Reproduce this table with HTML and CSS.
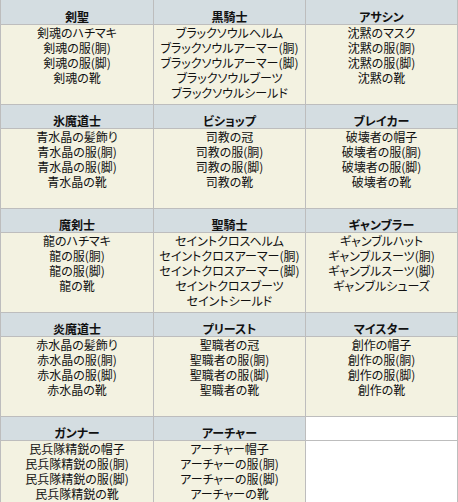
FILE: index.html
```html
<!DOCTYPE html>
<html lang="ja">
<head>
<meta charset="utf-8">
<link rel="stylesheet" href="styles.css">
</head>
<body>
<table class="gear">
  <colgroup><col class="c1"><col class="c2"><col class="c3"></colgroup>
  <tr class="head">
    <td>剣聖</td><td>黒騎士</td><td>アサシン</td>
  </tr>
  <tr class="items">
    <td>剣魂のハチマキ<br>剣魂の服(胴)<br>剣魂の服(脚)<br>剣魂の靴</td>
    <td>ブラックソウルヘルム<br>ブラックソウルアーマー(胴)<br>ブラックソウルアーマー(脚)<br>ブラックソウルブーツ<br>ブラックソウルシールド</td>
    <td>沈黙のマスク<br>沈黙の服(胴)<br>沈黙の服(脚)<br>沈黙の靴</td>
  </tr>
  <tr class="head">
    <td>氷魔道士</td><td>ビショップ</td><td>ブレイカー</td>
  </tr>
  <tr class="items">
    <td>青水晶の髪飾り<br>青水晶の服(胴)<br>青水晶の服(脚)<br>青水晶の靴</td>
    <td>司教の冠<br>司教の服(胴)<br>司教の服(脚)<br>司教の靴</td>
    <td>破壊者の帽子<br>破壊者の服(胴)<br>破壊者の服(脚)<br>破壊者の靴</td>
  </tr>
  <tr class="head">
    <td>魔剣士</td><td>聖騎士</td><td>ギャンブラー</td>
  </tr>
  <tr class="items">
    <td>龍のハチマキ<br>龍の服(胴)<br>龍の服(脚)<br>龍の靴</td>
    <td>セイントクロスヘルム<br>セイントクロスアーマー(胴)<br>セイントクロスアーマー(脚)<br>セイントクロスブーツ<br>セイントシールド</td>
    <td>ギャンブルハット<br>ギャンブルスーツ(胴)<br>ギャンブルスーツ(脚)<br>ギャンブルシューズ</td>
  </tr>
  <tr class="head">
    <td>炎魔道士</td><td>プリースト</td><td>マイスター</td>
  </tr>
  <tr class="items">
    <td>赤水晶の髪飾り<br>赤水晶の服(胴)<br>赤水晶の服(脚)<br>赤水晶の靴</td>
    <td>聖職者の冠<br>聖職者の服(胴)<br>聖職者の服(脚)<br>聖職者の靴</td>
    <td>創作の帽子<br>創作の服(胴)<br>創作の服(脚)<br>創作の靴</td>
  </tr>
  <tr class="head">
    <td>ガンナー</td><td>アーチャー</td><td class="empty"></td>
  </tr>
  <tr class="items last">
    <td>民兵隊精鋭の帽子<br>民兵隊精鋭の服(胴)<br>民兵隊精鋭の服(脚)<br>民兵隊精鋭の靴</td>
    <td>アーチャー帽子<br>アーチャーの服(胴)<br>アーチャーの服(脚)<br>アーチャーの靴</td>
    <td class="empty"></td>
  </tr>
</table>
</body>
</html>
```

FILE: styles.css
```css
html, body {
  margin: 0;
  padding: 0;
  background: #ffffff;
}

.gear {
  width: 457px;
  border-collapse: collapse;
  table-layout: fixed;
  font-family: "Noto Sans CJK JP", "Liberation Sans", sans-serif;
  font-size: 12px;
  color: #111111;
  font-feature-settings: "palt";
}

.c1 { width: 153px; }
.c2 { width: 152px; }
.c3 { width: 152px; }

.gear td {
  border: 1px solid #bdbdbd;
  text-align: center;
  padding: 0;
}

.gear tr:first-child td {
  border-top: none;
}

.head td {
  background: #d4dde1;
  height: 24px;
  vertical-align: bottom;
  font-weight: bold;
  line-height: 13px;
  padding-bottom: 1px;
  box-sizing: border-box;
}

.items td {
  background: #f3f2e1;
  height: 80px;
  vertical-align: top;
  line-height: 15px;
  box-sizing: border-box;
}

.items.last td {
  height: 62px;
}

.gear td.empty {
  background: #ffffff;
}
```
